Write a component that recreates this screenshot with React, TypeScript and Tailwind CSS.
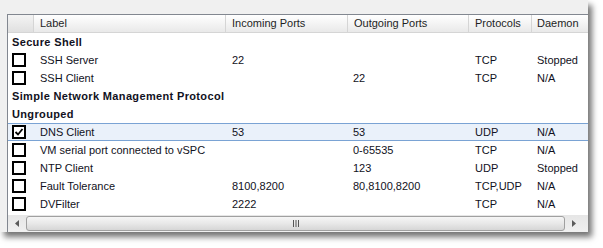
import React from "react";

type Row =
  | { kind: "group"; label: string }
  | {
      kind: "item";
      label: string;
      inPorts: string;
      outPorts: string;
      proto: string;
      daemon: string;
      checked?: boolean;
      selected?: boolean;
    };

const rows: Row[] = [
  { kind: "group", label: "Secure Shell" },
  { kind: "item", label: "SSH Server", inPorts: "22", outPorts: "", proto: "TCP", daemon: "Stopped" },
  { kind: "item", label: "SSH Client", inPorts: "", outPorts: "22", proto: "TCP", daemon: "N/A" },
  { kind: "group", label: "Simple Network Management Protocol" },
  { kind: "group", label: "Ungrouped" },
  { kind: "item", label: "DNS Client", inPorts: "53", outPorts: "53", proto: "UDP", daemon: "N/A", checked: true, selected: true },
  { kind: "item", label: "VM serial port connected to vSPC", inPorts: "", outPorts: "0-65535", proto: "TCP", daemon: "N/A" },
  { kind: "item", label: "NTP Client", inPorts: "", outPorts: "123", proto: "UDP", daemon: "Stopped" },
  { kind: "item", label: "Fault Tolerance", inPorts: "8100,8200", outPorts: "80,8100,8200", proto: "TCP,UDP", daemon: "N/A" },
  { kind: "item", label: "DVFilter", inPorts: "2222", outPorts: "", proto: "TCP", daemon: "N/A" },
];

const cols = "grid grid-cols-[26px_192px_122px_121px_63px_1fr]";

function Checkbox({ checked }: { checked?: boolean }) {
  return (
    <div className="w-[14px] h-[14px] border-2 border-black bg-white flex items-center justify-center">
      {checked && (
        <svg width="10" height="10" viewBox="0 0 10 10">
          <path d="M1.5 5 L4 7.5 L8.5 2" fill="none" stroke="#000" strokeWidth="1.8" />
        </svg>
      )}
    </div>
  );
}

function Header() {
  const cell = "h-full flex items-center border-r border-[#d5d5d5] pl-[6px] whitespace-nowrap";
  return (
    <div className={`${cols} h-[18px] border-b border-[#d5d5d5] bg-gradient-to-b from-[#ffffff] to-[#e9e9e9] text-[#1e1e1e]`}>
      <div className={`${cell} bg-gradient-to-b from-[#f4f4f4] to-[#e0e0e0]`}></div>
      <div className={cell}>Label</div>
      <div className={cell}>Incoming Ports</div>
      <div className={cell}>Outgoing Ports</div>
      <div className={cell}>Protocols</div>
      <div className="h-full flex items-center pl-[5px]">Daemon</div>
    </div>
  );
}

function ScrollBar() {
  return (
    <div className="h-[17px] flex bg-gradient-to-b from-[#e6e6e6] to-[#f0f0f0] pr-[5px]">
      <div className="w-[18px] flex items-center justify-center">
        <svg width="4" height="7" viewBox="0 0 4 7">
          <path d="M4 0 L0 3.5 L4 7 Z" fill="#5a5a5a" />
        </svg>
      </div>
      <div className="flex-1 my-[1px] rounded-[3px] border border-[#a0a0a0] bg-gradient-to-b from-[#f6f6f6] via-[#e8e8e8] to-[#d6d6d6] flex items-center justify-center">
        <svg width="8" height="7" viewBox="0 0 8 7">
          <path d="M1.5 0 V7 M4 0 V7 M6.5 0 V7" stroke="#555" strokeWidth="1" />
        </svg>
      </div>
      <div className="w-[18px] flex items-center justify-center">
        <svg width="4" height="7" viewBox="0 0 4 7">
          <path d="M0 0 L4 3.5 L0 7 Z" fill="#5a5a5a" />
        </svg>
      </div>
    </div>
  );
}

export default function App() {
  return (
    <div className="w-[603px] h-[248px] bg-white overflow-hidden font-['Liberation_Sans',Arial,sans-serif] text-[11px] text-[#111122]">
      <div className="w-[588px] h-[232px] bg-[#f0f0f0] pl-[7px] pt-[14px] shadow-[4px_5px_6px_rgba(0,0,0,0.55)]">
        <div className="h-full border-l border-t border-[#828790] bg-white flex flex-col overflow-hidden">
          <Header />
          <div className="flex-1">
            {rows.map((r, i) =>
              r.kind === "group" ? (
                <div key={i} className="h-[18px] flex items-center pl-[4px] font-bold tracking-[0.35px] whitespace-nowrap">
                  {r.label}
                </div>
              ) : (
                <div
                  key={i}
                  className={`${cols} h-[18px] items-center whitespace-nowrap ${
                    r.selected ? "bg-[#eaf1fa] border-y border-[#7aa3d4]" : ""
                  }`}
                >
                  <div className="pl-[4px]">
                    <Checkbox checked={r.checked} />
                  </div>
                  <div className="pl-[6px]">{r.label}</div>
                  <div className="pl-[6px]">{r.inPorts}</div>
                  <div className="pl-[5px]">{r.outPorts}</div>
                  <div className="pl-[6px]">{r.proto}</div>
                  <div className="pl-[5px]">{r.daemon}</div>
                </div>
              )
            )}
          </div>
          <ScrollBar />
        </div>
      </div>
    </div>
  );
}
